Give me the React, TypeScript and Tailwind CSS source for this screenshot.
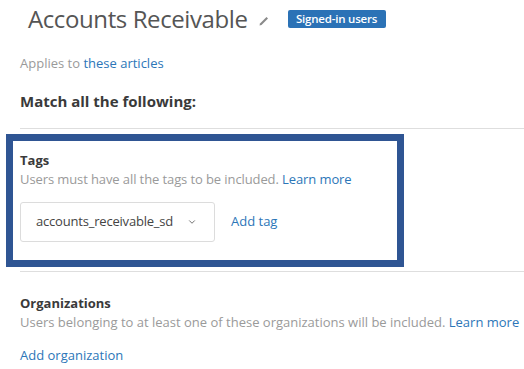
import { ChevronDown } from "lucide-react";

function Pencil() {
  return (
    <svg width="12" height="12" viewBox="0 0 12 12" className="text-[#8a8a8a]">
      <path d="M1.5 10.5 L2 8.5 L8.5 2 L10 3.5 L3.5 10 Z" fill="currentColor" />
    </svg>
  );
}

export default function App() {
  return (
    <div className="w-[524px] h-[369px] overflow-hidden bg-white font-['Open_Sans',sans-serif]">
      <div className="flex items-center pl-[28px] pt-[2px] h-[36px]">
        <h1 className="text-[24px] text-[#555] tracking-[-0.4px]">Accounts Receivable</h1>
        <span className="ml-[10px] mt-[3px]">
          <Pencil />
        </span>
        <span className="ml-[18px] h-[18px] w-[98px] rounded-[2px] bg-[#2b72b6] text-white text-[11.5px] font-semibold flex items-center justify-center tracking-[-0.2px]">
          Signed-in users
        </span>
      </div>

      <div className="pl-[20px]">
        <p className="mt-[18px] text-[13px] text-[#9a9a9a]">
          Applies to <span className="text-[#2c76b8]">these articles</span>
        </p>
        <p className="mt-[16px] text-[15px] font-bold text-[#3a3a3a]">
          Match all the following:
        </p>
        <div className="mt-[16px] h-px bg-[#dedede]" />
      </div>

      <div className="ml-[6px] mt-[5px] w-[398px] h-[133px] border-[7px] border-[#2f5593] px-[7px] pt-[10px]">
        <p className="text-[13px] font-bold text-[#3a3a3a] leading-[19px]">Tags</p>
        <p className="text-[13px] text-[#9a9a9a] leading-[19px] tracking-[-0.1px]">
          Users must have all the tags to be included. <span className="text-[#2c76b8]">Learn more</span>
        </p>
        <div className="mt-[13px] flex items-center">
          <div className="w-[195px] h-[40px] border border-[#dcdcdc] rounded-[3px] flex items-center pl-[15px] pr-[17px] justify-between">
            <span className="text-[13px] text-[#444] tracking-[-0.2px]">accounts_receivable_sd</span>
            <ChevronDown className="w-[10px] h-[10px] text-[#666]" strokeWidth={2.2} />
          </div>
          <span className="ml-[16px] text-[13px] text-[#2c76b8]">Add tag</span>
        </div>
      </div>

      <div className="pl-[20px]">
        <div className="mt-[4px] h-px bg-[#dedede]" />
        <p className="mt-[22px] text-[13px] font-bold text-[#3a3a3a] leading-[19px]">Organizations</p>
        <p className="text-[13px] text-[#9a9a9a] leading-[19px] whitespace-nowrap">
          Users belonging to at least one of these organizations will be included.{" "}
          <span className="text-[#2c76b8]">Learn more</span>
        </p>
        <p className="mt-[14px] text-[13px] text-[#2c76b8]">Add organization</p>
      </div>
    </div>
  );
}
